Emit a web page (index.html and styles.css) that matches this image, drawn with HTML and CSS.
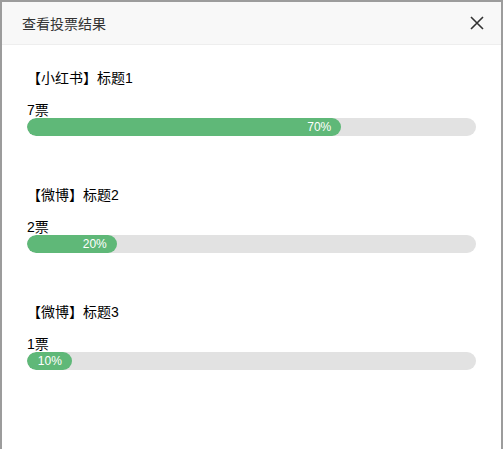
FILE: index.html
```html
<!DOCTYPE html>
<html lang="zh">
<head>
<meta charset="utf-8">
<link rel="stylesheet" href="styles.css">
</head>
<body>
<div class="dialog">
  <div class="dialog-title">
    <span>查看投票结果</span>
    <span class="close" aria-label="关闭">
      <svg width="14" height="14" viewBox="0 0 14 14"><path d="M1 1L13 13M13 1L1 13" stroke="#333" stroke-width="1.6" fill="none"/></svg>
    </span>
  </div>
  <div class="dialog-body">
    <div class="item">
      <div class="item-title">【小红书】标题1</div>
      <div class="votes">7票</div>
      <div class="progress"><div class="progress-bar" style="width:70%"><span>70%</span></div></div>
    </div>
    <div class="item">
      <div class="item-title">【微博】标题2</div>
      <div class="votes">2票</div>
      <div class="progress"><div class="progress-bar" style="width:20%"><span>20%</span></div></div>
    </div>
    <div class="item">
      <div class="item-title">【微博】标题3</div>
      <div class="votes">1票</div>
      <div class="progress"><div class="progress-bar" style="width:10%"><span>10%</span></div></div>
    </div>
  </div>
</div>
</body>
</html>
```

FILE: styles.css
```css
html, body {
  margin: 0;
  padding: 0;
  height: 100%;
}
body {
  background: #9c9c9c;
  font-family: "Liberation Sans", "Noto Sans CJK SC", sans-serif;
  color: #333;
  overflow: hidden;
}
.dialog {
  margin: 2px 2px 0 2px;
  background: #fff;
  height: 100%;
}
.dialog-title {
  height: 42px;
  background: #f8f8f8;
  border-bottom: 1px solid #eee;
  padding: 0 17px 0 20px;
  display: flex;
  align-items: center;
  justify-content: space-between;
  font-size: 14px;
  color: #333;
}
.close {
  display: flex;
  width: 14px;
  height: 14px;
  margin-top: -1px;
}
.dialog-body {
  padding: 23px 25px 0 25px;
  display: flex;
  flex-direction: column;
  gap: 49px;
}
.item-title {
  font-size: 14px;
  line-height: 20px;
  color: #000;
  margin-left: 0;
}
.votes {
  margin-top: 15px;
  font-size: 14px;
  line-height: 15px;
  color: #000;
}
.progress {
  height: 18px;
  border-radius: 20px;
  background: #e2e2e2;
  overflow: hidden;
}
.progress-bar {
  height: 100%;
  background: #5fb878;
  border-radius: 20px;
  display: flex;
  align-items: center;
  justify-content: flex-end;
  padding-right: 10px;
  box-sizing: border-box;
  color: #fff;
  font-size: 12px;
}
```
